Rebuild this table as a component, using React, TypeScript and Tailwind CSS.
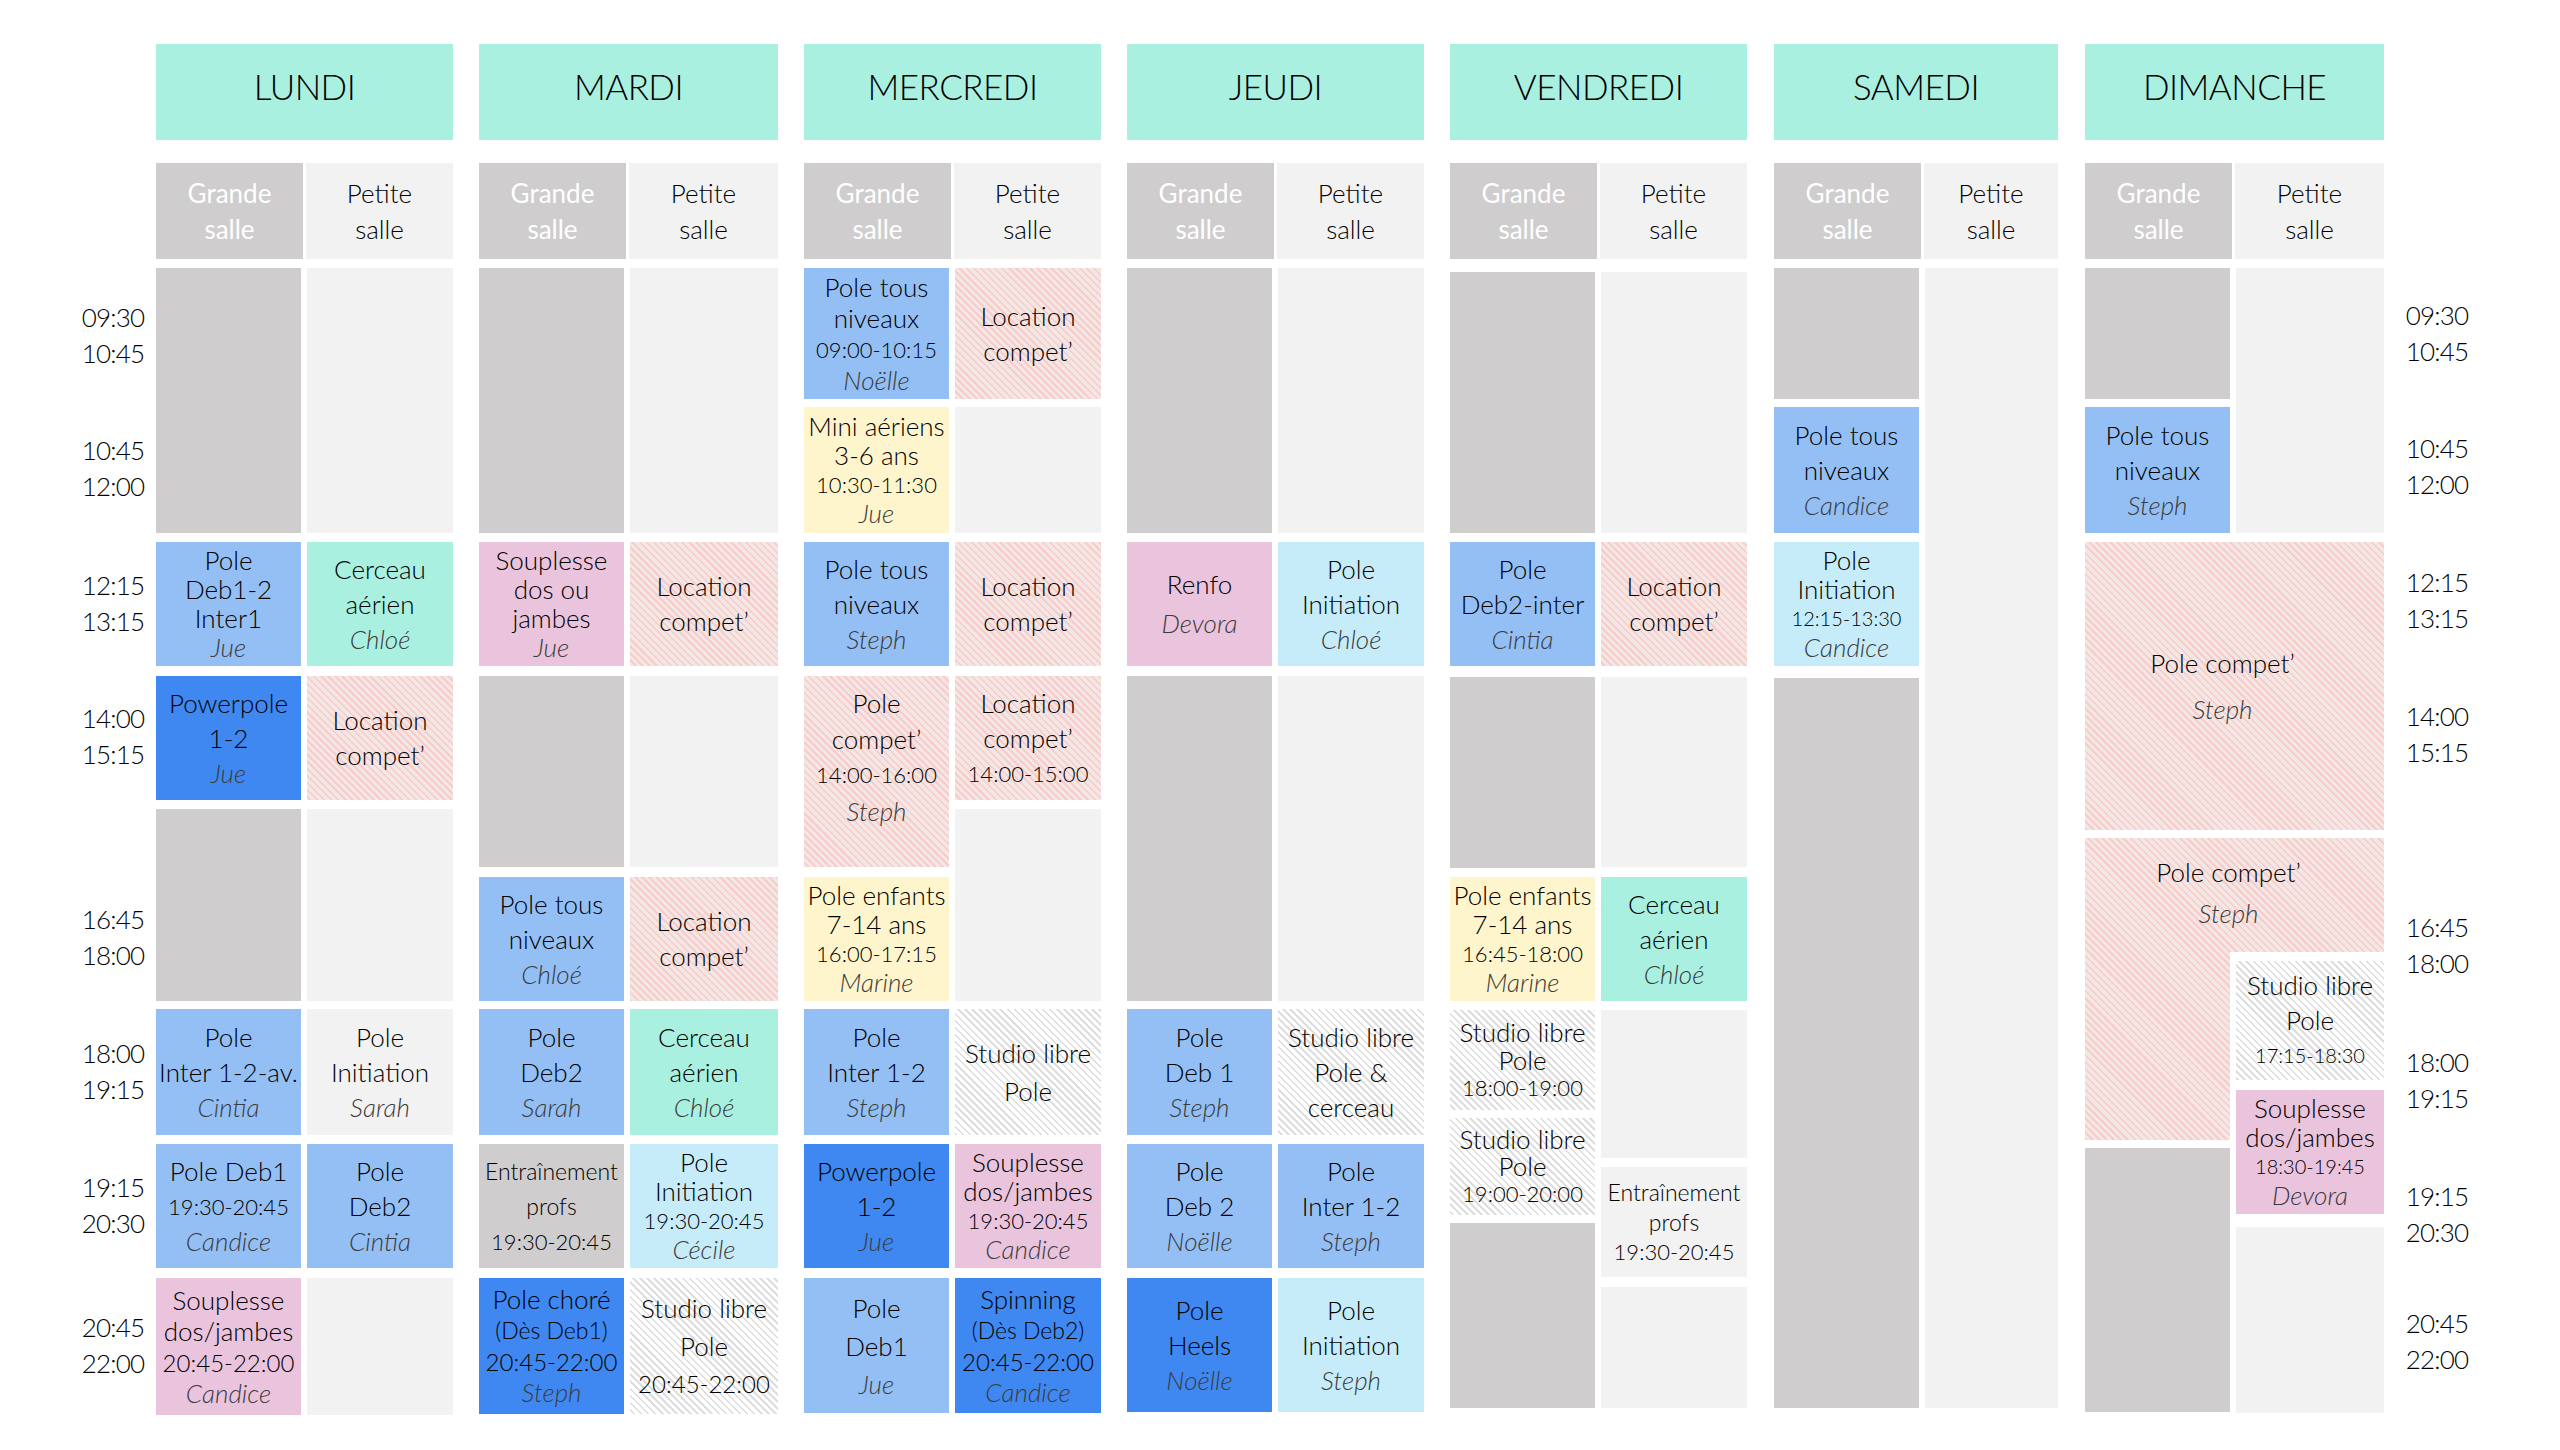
import React from "react";

type Kind =
  | "gray"
  | "light"
  | "blue"
  | "dark"
  | "pink"
  | "teal"
  | "cyan"
  | "yellow"
  | "hatch"
  | "studio";

type Cell = { a: number; b: number; kind: Kind; lines: string[]; lead?: string };

const BG: Record<Kind, string> = {
  gray: "bg-[#cfcdce]",
  light: "bg-[#f2f2f2]",
  blue: "bg-[#93bff5]",
  dark: "bg-[#3f88f2]",
  pink: "bg-[#eac3dc]",
  teal: "bg-[#a9f0e1]",
  cyan: "bg-[#c6ecfa]",
  yellow: "bg-[#fff5cd]",
  hatch:
    "bg-[repeating-linear-gradient(45deg,#f4e6e2_0px,#f4e6e2_3.2px,#f7cccc_3.2px,#f7cccc_5px)] bg-fixed",
  studio:
    "bg-[repeating-linear-gradient(45deg,#ffffff_0px,#ffffff_3.2px,#dedede_3.2px,#dedede_5px)] bg-fixed",
};

const C = (a: number, b: number, kind: Kind, ...lines: string[]): Cell => ({ a, b, kind, lines });
const L = (cell: Cell, lead: string): Cell => ({ ...cell, lead });

const AP = "\u2019";

function Line({ s }: { s: string }) {
  const p = s[0];
  const t = s.slice(1);
  if (p === "~") return <div className="whitespace-nowrap text-[26px] italic text-[#3c3c3c]">{t}</div>;
  if (p === "#") return <div className="whitespace-nowrap text-[22px]">{t}</div>;
  if (p === "%") return <div className="whitespace-nowrap text-[24px]">{t}</div>;
  if (p === "$") return <div className="whitespace-nowrap text-[20px]">{t}</div>;
  if (p === "!") return <div className="whitespace-nowrap text-[23px]">{t}</div>;
  return <div className="whitespace-nowrap text-[26px]">{s}</div>;
}

function Block({ c, mt }: { c: Cell; mt: number }) {
  const n = c.lines.length;
  const h = c.b - c.a;
  const lead = c.lead ?? (n >= 4 ? (h >= 130 ? "leading-[31px]" : "leading-[29px]") : "leading-[35px]");
  return (
    <div
      className={`flex flex-col items-center justify-center text-center ${BG[c.kind]} ${lead}`}
      style={{ height: h, marginTop: mt }}
    >
      {c.lines.map((s, i) => (
        <Line key={i} s={s} />
      ))}
    </div>
  );
}

function Column({ cells, top, className }: { cells: Cell[]; top: number; className?: string }) {
  let prev = top;
  return (
    <div className={`flex flex-col ${className ?? ""}`}>
      {cells.map((c, i) => {
        const mt = c.a - prev;
        prev = c.b;
        return <Block key={i} c={c} mt={mt} />;
      })}
    </div>
  );
}

type Day = { name: string; w: string; extra?: string; g: Cell[]; p: Cell[] };

const DAYS: Day[] = [
  {
    name: "LUNDI",
    w: "w-[297px]",
    g: [
      C(268, 533, "gray"),
      C(542, 666, "blue", "Pole", "Deb1-2", "Inter1", "~Jue"),
      C(676, 800, "dark", "Powerpole", "1-2", "~Jue"),
      C(809, 1001, "gray"),
      C(1009, 1135, "blue", "Pole", "Inter 1-2-av.", "~Cintia"),
      C(1144, 1268, "blue", "Pole Deb1", "#19:30-20:45", "~Candice"),
      C(1278, 1415, "pink", "Souplesse", "dos/jambes", "%20:45-22:00", "~Candice"),
    ],
    p: [
      C(268, 533, "light"),
      C(542, 666, "teal", "Cerceau", "aérien", "~Chloé"),
      C(676, 800, "hatch", "Location", "compet" + AP),
      C(809, 1001, "light"),
      C(1009, 1135, "light", "Pole", "Initiation", "~Sarah"),
      C(1144, 1268, "blue", "Pole", "Deb2", "~Cintia"),
      C(1278, 1415, "light"),
    ],
  },
  {
    name: "MARDI",
    w: "w-[299px]",
    g: [
      C(268, 533, "gray"),
      C(542, 666, "pink", "Souplesse", "dos ou", "jambes", "~Jue"),
      C(676, 867, "gray"),
      C(877, 1001, "blue", "Pole tous", "niveaux", "~Chloé"),
      C(1009, 1135, "blue", "Pole", "Deb2", "~Sarah"),
      C(1144, 1268, "gray", "!Entraînement", "!profs", "#19:30-20:45"),
      C(1278, 1414, "dark", "Pole choré", "!(Dès Deb1)", "%20:45-22:00", "~Steph"),
    ],
    p: [
      C(268, 533, "light"),
      C(542, 666, "hatch", "Location", "compet" + AP),
      C(676, 867, "light"),
      C(877, 1001, "hatch", "Location", "compet" + AP),
      C(1009, 1135, "teal", "Cerceau", "aérien", "~Chloé"),
      C(1144, 1268, "cyan", "Pole", "Initiation", "#19:30-20:45", "~Cécile"),
      L(C(1278, 1414, "studio", "Studio libre", "Pole", "%20:45-22:00"), "leading-[38px]"),
    ],
  },
  {
    name: "MERCREDI",
    w: "w-[297px]",
    g: [
      C(268, 399, "blue", "Pole tous", "niveaux", "#09:00-10:15", "~Noëlle"),
      C(407, 533, "yellow", "Mini aériens", "3-6 ans", "#10:30-11:30", "~Jue"),
      C(542, 666, "blue", "Pole tous", "niveaux", "~Steph"),
      L(C(676, 867, "hatch", "Pole", "compet" + AP, "#14:00-16:00", "~Steph"), "leading-[36px] pb-[30px]"),
      C(877, 1001, "yellow", "Pole enfants", "7-14 ans", "#16:00-17:15", "~Marine"),
      C(1009, 1135, "blue", "Pole", "Inter 1-2", "~Steph"),
      C(1144, 1268, "dark", "Powerpole", "1-2", "~Jue"),
      L(C(1278, 1413, "blue", "Pole", "Deb1", "~Jue"), "leading-[38px]"),
    ],
    p: [
      C(268, 399, "hatch", "Location", "compet" + AP),
      C(407, 533, "light"),
      C(542, 666, "hatch", "Location", "compet" + AP),
      C(676, 800, "hatch", "Location", "compet" + AP, "#14:00-15:00"),
      C(809, 1001, "light"),
      L(C(1009, 1135, "studio", "Studio libre", "Pole"), "leading-[38px]"),
      C(1144, 1268, "pink", "Souplesse", "dos/jambes", "#19:30-20:45", "~Candice"),
      C(1278, 1413, "dark", "Spinning", "!(Dès Deb2)", "%20:45-22:00", "~Candice"),
    ],
  },
  {
    name: "JEUDI",
    w: "w-[297px]",
    g: [
      C(268, 533, "gray"),
      L(C(542, 666, "pink", "Renfo", "~Devora"), "leading-[39px]"),
      C(676, 1001, "gray"),
      C(1009, 1135, "blue", "Pole", "Deb 1", "~Steph"),
      C(1144, 1268, "blue", "Pole", "Deb 2", "~Noëlle"),
      C(1278, 1412, "dark", "Pole", "Heels", "~Noëlle"),
    ],
    p: [
      C(268, 533, "light"),
      C(542, 666, "cyan", "Pole", "Initiation", "~Chloé"),
      C(676, 1001, "light"),
      C(1009, 1135, "studio", "Studio libre", "Pole &", "cerceau"),
      C(1144, 1268, "blue", "Pole", "Inter 1-2", "~Steph"),
      C(1278, 1412, "cyan", "Pole", "Initiation", "~Steph"),
    ],
  },
  {
    name: "VENDREDI",
    w: "w-[297px]",
    g: [
      C(272, 533, "gray"),
      C(542, 666, "blue", "Pole", "Deb2-inter", "~Cintia"),
      C(677, 868, "gray"),
      C(877, 1001, "yellow", "Pole enfants", "7-14 ans", "#16:45-18:00", "~Marine"),
      L(C(1010, 1110, "studio", "Studio libre", "Pole", "#18:00-19:00"), "leading-[28px]"),
      L(C(1118, 1215, "studio", "Studio libre", "Pole", "#19:00-20:00"), "leading-[27px]"),
      C(1223, 1408, "gray"),
    ],
    p: [
      C(272, 533, "light"),
      C(542, 666, "hatch", "Location", "compet" + AP),
      C(677, 867, "light"),
      C(877, 1001, "teal", "Cerceau", "aérien", "~Chloé"),
      C(1010, 1158, "light"),
      L(C(1167, 1277, "light", "!Entraînement", "!profs", "#19:30-20:45"), "leading-[30px]"),
      C(1287, 1408, "light"),
    ],
  },
  {
    name: "SAMEDI",
    w: "w-[284px]",
    extra: "ml-[1px]",
    g: [
      C(268, 399, "gray"),
      C(407, 533, "blue", "Pole tous", "niveaux", "~Candice"),
      C(542, 666, "cyan", "Pole", "Initiation", "$12:15-13:30", "~Candice"),
      C(678, 1408, "gray"),
    ],
    p: [C(268, 1408, "light")],
  },
];

const LEFT: [number, number, string, string][] = [
  [268, 402, "09:30", "10:45"],
  [407, 529, "10:45", "12:00"],
  [542, 664, "12:15", "13:15"],
  [676, 796, "14:00", "15:15"],
  [877, 997, "16:45", "18:00"],
  [1009, 1133, "18:00", "19:15"],
  [1144, 1266, "19:15", "20:30"],
  [1278, 1412, "20:45", "22:00"],
];

const RIGHT: [number, number, string, string][] = [
  [268, 398, "09:30", "10:45"],
  [407, 525, "10:45", "12:00"],
  [542, 658, "12:15", "13:15"],
  [676, 792, "14:00", "15:15"],
  [885, 1005, "16:45", "18:00"],
  [1020, 1140, "18:00", "19:15"],
  [1154, 1274, "19:15", "20:30"],
  [1278, 1404, "20:45", "22:00"],
];

function TimeCol({ labels, className }: { labels: [number, number, string, string][]; className: string }) {
  let prev = 44;
  return (
    <div className={`flex flex-col ${className}`}>
      {labels.map(([a, b, t1, t2], i) => {
        const mt = a - prev;
        prev = b;
        return (
          <div
            key={i}
            className="flex flex-col items-center justify-center text-[26px] leading-[36px] tracking-[-0.8px] text-black"
            style={{ height: b - a, marginTop: mt }}
          >
            <div>{t1}</div>
            <div>{t2}</div>
          </div>
        );
      })}
    </div>
  );
}

function DayHead({ name }: { name: string }) {
  return (
    <>
      <div className="flex h-[96px] items-center justify-center bg-[#a9f0e1] pb-[12px] text-[35px] tracking-[-0.5px] text-black">
        {name}
      </div>
      <div className="mt-[23px] flex h-[96px] gap-[3px] text-[26px] leading-[36px]">
        <div className="flex w-[147px] flex-col items-center justify-center bg-[#cfcdce] font-normal text-white">
          <div>Grande</div>
          <div>salle</div>
        </div>
        <div className="flex flex-1 flex-col items-center justify-center bg-[#f2f2f2] text-black">
          <div>Petite</div>
          <div>salle</div>
        </div>
      </div>
    </>
  );
}

function DayCol({ d }: { d: Day }) {
  return (
    <div className={`flex flex-col ${d.w} ${d.extra ?? ""}`}>
      <DayHead name={d.name} />
      <div className="mt-[9px] flex gap-[6px]">
        <Column cells={d.g} top={268} className="w-[145px]" />
        <Column cells={d.p} top={268} className="flex-1" />
      </div>
    </div>
  );
}

function Dimanche() {
  return (
    <div className="ml-[1px] flex w-[299px] flex-col">
      <DayHead name="DIMANCHE" />
      <div className="mt-[9px] flex flex-col">
        <div className="flex gap-[6px]">
          <Column
            cells={[C(268, 399, "gray"), C(407, 533, "blue", "Pole tous", "niveaux", "~Steph")]}
            top={268}
            className="w-[145px]"
          />
          <Column cells={[C(268, 533, "light")]} top={268} className="flex-1" />
        </div>
        <div
          className={`mt-[9px] flex h-[288px] flex-col items-center justify-center pr-[24px] leading-[46px] ${BG.hatch}`}
        >
          <Line s={"Pole compet" + AP} />
          <Line s="~Steph" />
        </div>
        <div
          className={`mt-[8px] flex h-[114px] flex-col items-center justify-center pb-[4px] pr-[12px] leading-[41px] ${BG.hatch}`}
        >
          <Line s={"Pole compet" + AP} />
          <Line s="~Steph" />
        </div>
        <div className="flex gap-[6px]">
          <Column cells={[C(952, 1140, "hatch"), C(1148, 1412, "gray")]} top={952} className="w-[145px]" />
          <Column
            cells={[
              C(961, 1080, "studio", "Studio libre", "Pole", "$17:15-18:30"),
              C(1090, 1214, "pink", "Souplesse", "dos/jambes", "$18:30-19:45", "~Devora"),
              C(1227, 1413, "light"),
            ]}
            top={952}
            className="flex-1"
          />
        </div>
      </div>
    </div>
  );
}

export default function App() {
  return (
    <div className="min-h-[1450px] w-[2560px] bg-white font-['Lato','Liberation_Sans',sans-serif] font-light text-black">
      <div className="flex pt-[44px]">
        <TimeCol labels={LEFT} className="ml-[76px] mr-[6px] w-[74px]" />
        <div className="flex gap-[26px]">
          {DAYS.map((d) => (
            <DayCol key={d.name} d={d} />
          ))}
          <Dimanche />
        </div>
        <TimeCol labels={RIGHT} className="ml-[21px] w-[64px]" />
      </div>
    </div>
  );
}
